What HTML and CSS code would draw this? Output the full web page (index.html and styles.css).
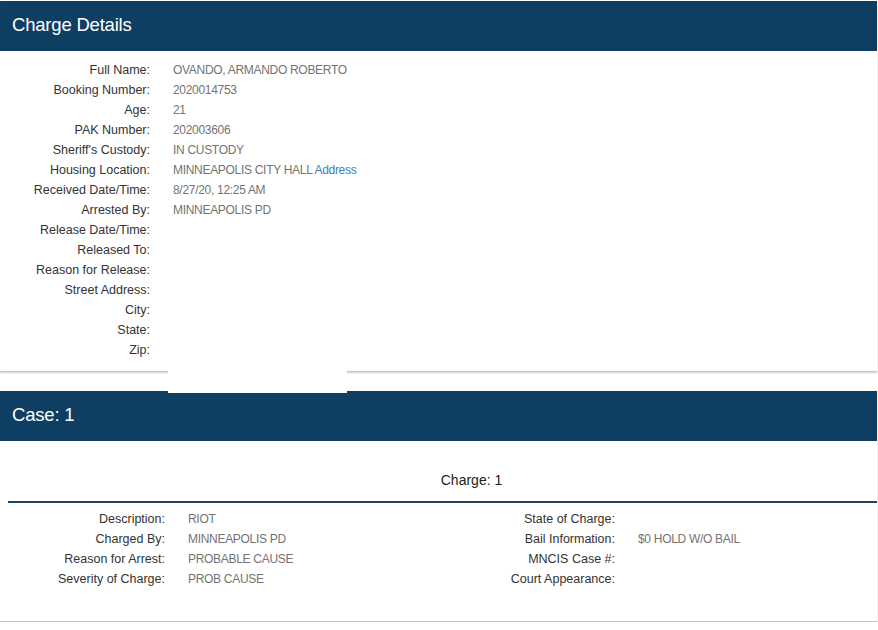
FILE: index.html
```
<!DOCTYPE html>
<html>
<head>
<meta charset="utf-8">
<link rel="stylesheet" href="styles.css">
</head>
<body>
<div class="page">
  <section class="card card-details">
    <h2 class="bar">Charge Details</h2>
    <div class="details">
      <div class="row"><span class="lbl">Full Name:</span><span class="val">OVANDO, ARMANDO ROBERTO</span></div>
      <div class="row"><span class="lbl">Booking Number:</span><span class="val">2020014753</span></div>
      <div class="row"><span class="lbl">Age:</span><span class="val">21</span></div>
      <div class="row"><span class="lbl">PAK Number:</span><span class="val">202003606</span></div>
      <div class="row"><span class="lbl">Sheriff's Custody:</span><span class="val">IN CUSTODY</span></div>
      <div class="row"><span class="lbl">Housing Location:</span><span class="val">MINNEAPOLIS CITY HALL <a class="link" href="#">Address</a></span></div>
      <div class="row"><span class="lbl">Received Date/Time:</span><span class="val">8/27/20, 12:25 AM</span></div>
      <div class="row"><span class="lbl">Arrested By:</span><span class="val">MINNEAPOLIS PD</span></div>
      <div class="row"><span class="lbl">Release Date/Time:</span><span class="val"></span></div>
      <div class="row"><span class="lbl">Released To:</span><span class="val"></span></div>
      <div class="row"><span class="lbl">Reason for Release:</span><span class="val"></span></div>
      <div class="row"><span class="lbl">Street Address:</span><span class="val"></span></div>
      <div class="row"><span class="lbl">City:</span><span class="val"></span></div>
      <div class="row"><span class="lbl">State:</span><span class="val"></span></div>
      <div class="row"><span class="lbl">Zip:</span><span class="val"></span></div>
    </div>
    <div class="popup"></div>
  </section>

  <section class="card card-case">
    <h2 class="bar">Case: 1</h2>
    <div class="charge-title">Charge: 1</div>
    <div class="charge-grid">
      <div class="col">
        <div class="row"><span class="lbl">Description:</span><span class="val">RIOT</span></div>
        <div class="row"><span class="lbl">Charged By:</span><span class="val">MINNEAPOLIS PD</span></div>
        <div class="row"><span class="lbl">Reason for Arrest:</span><span class="val">PROBABLE CAUSE</span></div>
        <div class="row"><span class="lbl">Severity of Charge:</span><span class="val">PROB CAUSE</span></div>
      </div>
      <div class="col">
        <div class="row"><span class="lbl">State of Charge:</span><span class="val"></span></div>
        <div class="row"><span class="lbl">Bail Information:</span><span class="val">$0 HOLD W/O BAIL</span></div>
        <div class="row"><span class="lbl">MNCIS Case #:</span><span class="val"></span></div>
        <div class="row"><span class="lbl">Court Appearance:</span><span class="val"></span></div>
      </div>
    </div>
  </section>
</div>
</body>
</html>
```

FILE: styles.css
```
html, body {
  margin: 0;
  padding: 0;
  background: #ffffff;
}

body {
  font-family: "Liberation Sans", Arial, sans-serif;
  font-size: 12.5px;
  color: #333333;
}

.page {
  width: 878px;
  padding-top: 1px;
}

.card {
  position: relative;
  background: #ffffff;
  border-bottom: 1px solid #c4c4c4;
  box-shadow: 0 1px 2px rgba(0, 0, 0, 0.18);
  margin-right: 1px;
}

.card-details {
  padding-bottom: 11px;
  margin-bottom: 19px;
}

.bar {
  margin: 0;
  height: 50px;
  line-height: 48px;
  padding-left: 12px;
  background: #0f3e63;
  color: #ffffff;
  font-weight: normal;
  font-size: 18.5px;
  letter-spacing: -0.2px;
}

.details {
  padding-top: 9px;
}

.row {
  display: grid;
  grid-template-columns: 150px 1fr;
  column-gap: 23px;
  height: 20px;
  line-height: 20px;
  white-space: nowrap;
}

.lbl {
  text-align: right;
  color: #333333;
}

.val {
  color: #737373;
  font-size: 12px;
  letter-spacing: -0.3px;
}

.link {
  color: #3a80bf;
  text-decoration: none;
}

.popup {
  position: absolute;
  left: 168px;
  bottom: -22px;
  width: 179px;
  height: 22px;
  background: #ffffff;
  z-index: 2;
}

.charge-title {
  margin-left: 8px;
  padding: 29px 0 11px 58px;
  line-height: 20px;
  text-align: center;
  font-size: 14px;
  color: #222222;
  border-bottom: 2px solid #1a4568;
}

.charge-grid {
  display: grid;
  grid-template-columns: 450px 1fr;
  padding-top: 6px;
  padding-bottom: 32px;
}

.charge-grid .row {
  grid-template-columns: 165px 1fr;
}
```
